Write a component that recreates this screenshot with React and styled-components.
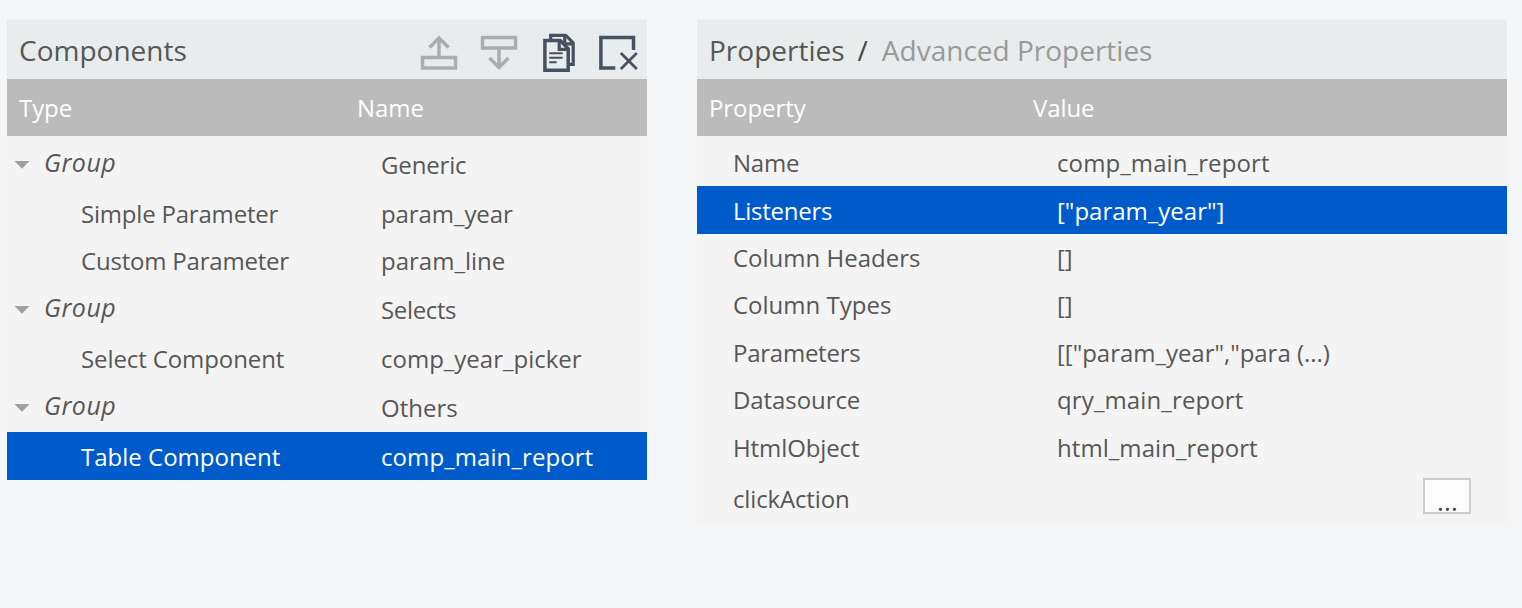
import React from 'react';
import styled, { createGlobalStyle } from 'styled-components';

const GlobalStyle = createGlobalStyle`
  * { box-sizing: border-box; }
  body {
    margin: 0;
    background: #f4f6f8;
    font-family: 'Open Sans', 'Noto Sans', sans-serif;
    color: #575757;
  }
`;

const Page = styled.main`
  display: flex;
  align-items: flex-start;
  gap: 50px;
  padding: 19px 0 0 7px;
`;

const Panel = styled.section`
  flex: none;
  width: ${(p) => p.$width}px;
  background: #f4f4f4;
`;

const TitleBar = styled.header`
  display: flex;
  justify-content: space-between;
  height: 60px;
  padding: 0 8px 0 12px;
  background: #e8eced;
  border-top: 1px solid #ecefef;
`;

const Title = styled.h2`
  margin: 0;
  font-size: 28px;
  font-weight: 400;
  line-height: 60px;
  white-space: pre;
`;

const Separator = styled.span`
  margin: 0 14px 0 13px;
  color: #444;
`;

const MutedTitle = styled.span`
  color: #999;
`;

const Toolbar = styled.div`
  display: flex;
  gap: 20px;
  padding-top: 12px;
`;

const ToolIcon = styled.svg`
  width: 40px;
  height: 40px;
  fill: none;
  stroke: ${(p) => (p.$disabled ? '#a7adb2' : '#465260')};
  stroke-width: 3.5;
`;

const HeadRow = styled.div`
  display: grid;
  grid-template-columns: ${(p) => p.$first}px 1fr;
  height: 57px;
  padding-left: 12px;
  background: #bbb;
  color: #fff;
  font-size: 24px;
  line-height: 58px;
  letter-spacing: -0.08px;
`;

const Rows = styled.div`
  padding-top: ${(p) => p.$top}px;
`;

const Row = styled.div`
  display: grid;
  grid-template-columns: ${(p) => p.$first}px 1fr auto;
  height: ${(p) => p.$height || 48}px;
  font-size: 24px;
  line-height: ${(p) => p.$line || 50}px;
  white-space: nowrap;
  background: ${(p) => (p.$selected ? '#005bca' : 'transparent')};
  color: ${(p) => (p.$selected ? '#fff' : 'inherit')};
`;

const Cell = styled.div`
  padding-left: ${(p) => p.$indent || 0}px;
  letter-spacing: ${(p) => p.$track || 0}px;
`;

const GroupCell = styled.div`
  display: flex;
  align-items: flex-start;
  gap: 14px;
  padding-left: 7px;
  font-size: 25px;
  font-style: italic;
  letter-spacing: 0.5px;
  line-height: 44px;
`;

const Arrow = styled.svg`
  width: 16px;
  height: 9px;
  margin-top: 20px;
  fill: #a0a0a0;
`;

const MoreButton = styled.button`
  width: 48px;
  height: 36px;
  margin: 4px 36px 0 0;
  padding: 0 0 0 1px;
  border: 2px solid #ccc;
  background: #fdfdfd;
  color: #444;
  font: 26px/42px 'Open Sans', sans-serif;
  letter-spacing: 0.1px;
`;

const components = [
  { group: true, name: 'Generic', height: 49, nameTrack: -0.15 },
  { type: 'Simple Parameter', name: 'param_year', height: 47, typeTrack: -0.2, nameTrack: -0.08 },
  { type: 'Custom Parameter', name: 'param_line', height: 49, typeTrack: -0.2 },
  { group: true, name: 'Selects', height: 49, nameTrack: -0.35 },
  { type: 'Select Component', name: 'comp_year_picker', height: 49, typeTrack: -0.1 },
  { group: true, name: 'Others', height: 49 },
  { type: 'Table Component', name: 'comp_main_report', height: 48, selected: true, nameTrack: 0.08 },
];

const properties = [
  { name: 'Name', value: 'comp_main_report', height: 48, nameTrack: -0.2, valueTrack: 0.1 },
  { name: 'Listeners', value: '["param_year"]', height: 48, selected: true, nameTrack: -0.25 },
  { name: 'Column Headers', value: '[]', height: 47 },
  { name: 'Column Types', value: '[]', height: 48 },
  { name: 'Parameters', value: '[["param_year","para (...)', height: 47, nameTrack: -0.25, valueTrack: -0.03 },
  { name: 'Datasource', value: 'qry_main_report', height: 48, nameTrack: -0.08, valueTrack: 0.12 },
  { name: 'HtmlObject', value: 'html_main_report', height: 50, nameTrack: -0.1, valueTrack: 0.06 },
  { name: 'clickAction', value: '', height: 51, more: true, nameTrack: -0.15 },
];

function MoveUpIcon() {
  return (
    <ToolIcon $disabled viewBox="0 0 40 40">
      <path d="M3.5 25.5h33v10.5h-33zM20 25V7M10.5 15.5L20 6l9.5 9.5" />
    </ToolIcon>
  );
}

function MoveDownIcon() {
  return (
    <ToolIcon $disabled viewBox="0 0 40 40">
      <path d="M3.5 5.5h33v10.5h-33zM20 16v18M10.5 26L20 35.5 29.5 26" />
    </ToolIcon>
  );
}

function DuplicateIcon() {
  return (
    <ToolIcon viewBox="-0.7 -0.4 40 40">
      <path d="M5.2 8.2h15.3l8 8v21.6H5.2z" />
      <path d="M19.5 8v9h9M11 7V3h15l7.5 7.5V32H29M25 3v8.5h8.5" strokeWidth="3.2" />
      <path d="M9.5 20.8h13.5M9.5 25.3h13.5M9.5 29.8h7.5" strokeWidth="2" />
    </ToolIcon>
  );
}

function DeleteIcon() {
  return (
    <ToolIcon viewBox="-0.3 0 40 40">
      <path d="M34.2 18V5.5H1.6V36H16" />
      <path d="M21.5 21l16 16M37.5 21l-16 16" strokeWidth="2.7" />
    </ToolIcon>
  );
}

export default function App() {
  return (
    <>
      <GlobalStyle />
      <Page>
        <Panel $width={640}>
          <TitleBar>
            <Title>Components</Title>
            <Toolbar>
              <MoveUpIcon />
              <MoveDownIcon />
              <DuplicateIcon />
              <DeleteIcon />
            </Toolbar>
          </TitleBar>
          <HeadRow $first={338}>
            <span>Type</span>
            <span>Name</span>
          </HeadRow>
          <Rows $top={4}>
            {components.map((c) => (
              <Row key={c.name} $first={374} $height={c.height} $selected={c.selected}>
                {c.group ? (
                  <GroupCell>
                    <Arrow viewBox="0 0 16 9">
                      <path d="M0.5 1h15L8 8.7z" />
                    </Arrow>
                    Group
                  </GroupCell>
                ) : (
                  <Cell $indent={74} $track={c.typeTrack}>{c.type}</Cell>
                )}
                <Cell $track={c.nameTrack}>{c.name}</Cell>
              </Row>
            ))}
          </Rows>
        </Panel>
        <Panel $width={810}>
          <TitleBar>
            <Title>
              Properties<Separator>/</Separator><MutedTitle>Advanced Properties</MutedTitle>
            </Title>
          </TitleBar>
          <HeadRow $first={324}>
            <span>Property</span>
            <span>Value</span>
          </HeadRow>
          <Rows $top={2}>
            {properties.map((p, i) => (
              <Row key={p.name} $first={360} $height={p.height} $line={i < 2 || p.more ? 50 : 48} $selected={p.selected}>
                <Cell $indent={36} $track={p.nameTrack}>{p.name}</Cell>
                <Cell $track={p.valueTrack}>{p.value}</Cell>
                {p.more && <MoreButton>...</MoreButton>}
              </Row>
            ))}
          </Rows>
        </Panel>
      </Page>
    </>
  );
}
